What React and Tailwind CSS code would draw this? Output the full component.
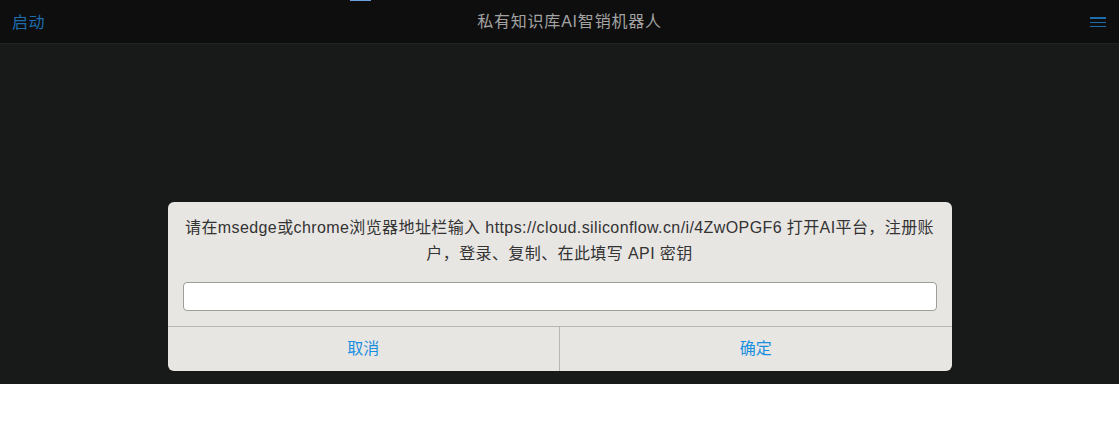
import React from "react";

export default function App() {
  const font = { fontFamily: '"Liberation Sans", "Noto Sans CJK SC", sans-serif' };
  return (
    <div className="w-[1119px] h-[425px] bg-white flex flex-col" style={font}>
      <div className="relative h-[44px] bg-[#0e0e0e] border-b border-[#222423] flex items-center justify-between px-[12px]">
        <div className="absolute left-[350px] top-0 w-[21px] h-px bg-[#6e9fe0]" />
        <span className="text-[16px] text-[#1d6cab] tracking-[0.5px] mt-[2px]">启动</span>
        <span className="absolute left-[20px] right-0 text-center text-[16px] tracking-[0.8px] text-[#a3a3a3] pointer-events-none">私有知识库AI智销机器人</span>
        <div className="flex flex-col mr-[1px] mt-[1px]">
          <div className="w-[16px] h-[2px] bg-[#1d6cab]" />
          <div className="w-[16px] h-[1px] bg-[#1d6cab] mt-[3px]" />
          <div className="w-[16px] h-[1px] bg-[#1d6cab] mt-[3px]" />
        </div>
      </div>
      <div className="h-[340px] bg-[#181a19] flex justify-center pt-[158px]">
        <div className="w-[784px] h-[169px] bg-[#e8e6e3] rounded-[6px] flex flex-col overflow-hidden">
          <div className="px-[12px] pt-[13px] text-center text-[16px] tracking-[0.4px] leading-[26px] text-[#333]">
            请在msedge或chrome浏览器地址栏输入 https://cloud.siliconflow.cn/i/4ZwOPGF6 打开AI平台，注册账
            <br />
            户，登录、复制、在此填写 API 密钥
          </div>
          <div className="px-[15px] pt-[15px] pb-[15px]">
            <div className="h-[29px] bg-white border border-[#9e9d99] rounded-[4px]" />
          </div>
          <div className="flex-1 flex border-t border-[#b8b6b1]">
            <div className="flex-1 flex items-center justify-center text-[16px] text-[#1a8fe0] border-r border-[#b8b6b1]">取消</div>
            <div className="flex-1 flex items-center justify-center text-[16px] text-[#1a8fe0]">确定</div>
          </div>
        </div>
      </div>
    </div>
  );
}
